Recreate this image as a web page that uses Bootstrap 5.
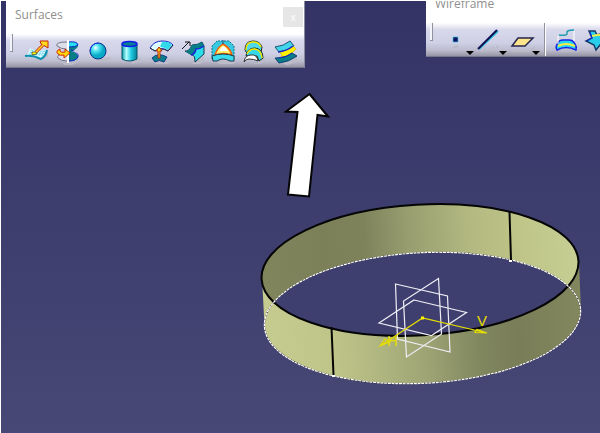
<!DOCTYPE html>
<html lang="en">
<head>
<meta charset="utf-8">
<meta name="viewport" content="width=device-width, initial-scale=1">
<title>Surfaces</title>
<link href="https://cdn.jsdelivr.net/npm/bootstrap@5.3.0/dist/css/bootstrap.min.css" rel="stylesheet">
<style>
body { background: #484876; font-family: "Open Sans", "Noto Sans", sans-serif; }
.viewport { border-left: 1px solid #fff; border-top: 1px solid #fff; background: linear-gradient(#333366, #484876); min-height: 100vh; }
.scene { width: calc(100% + 1px); margin: -1px 0 0 -1px; }
.tool-window { position: absolute; background: #fff; border-right: 1px solid #8c8ca0; border-bottom: 1px solid #77778c; }
.win-surfaces { left: 5px; top: 0; width: 299px; }
.win-wire { left: 425px; top: -11px; width: 230px; }
.win-title { font-size: 12px; line-height: 16px; color: #8f8f8f; height: 33px; padding: 6px 0 0 9px; }
.win-close { width: 20px; height: 20px; margin-right: 1px; background: #e6e6e6; color: #fff; font-size: 10px; line-height: 16px; }
.tool-strip { height: 33px; background: linear-gradient(#fff, #d9d9ec 20%, #cfcfe5 60%, #bdbdcf 82%, #9595a5); }
.grip { width: 3px; height: 18px; border-right: 1px solid #90909e; border-bottom: 1px solid #90909e; background: #f3f3fa; }
.tool { width: 30px; height: 28px; }
.tool svg, .scene { display: block; }
.wire-tool { width: 33px; }
.rule { width: 2px; height: 33px; background: #fff; border-left: 1px solid #90909e; }
</style>
<script src="https://cdn.jsdelivr.net/npm/bootstrap@5.3.0/dist/js/bootstrap.bundle.min.js"></script>
</head>
<body>
<main class="viewport position-relative overflow-hidden">
  <svg class="scene" viewBox="0 0 600 433" role="img" aria-label="Cylindrical surface with reference planes">
    <defs>
      <linearGradient id="back" gradientUnits="userSpaceOnUse" x1="262" y1="0" x2="579" y2="0"><stop stop-color="#80855c"/><stop offset=".2" stop-color="#7b8059"/><stop offset=".33" stop-color="#7e835c"/><stop offset=".46" stop-color="#969c6e"/><stop offset=".65" stop-color="#b1b77f"/><stop offset=".82" stop-color="#bfc588"/><stop offset="1" stop-color="#c6ce93"/></linearGradient>
      <linearGradient id="front" gradientUnits="userSpaceOnUse" x1="262" y1="0" x2="580" y2="0"><stop stop-color="#c6cb90"/><stop offset=".22" stop-color="#bfc589"/><stop offset=".38" stop-color="#aeb47e"/><stop offset=".53" stop-color="#9ba172"/><stop offset=".68" stop-color="#80865e"/><stop offset=".8" stop-color="#797e58"/><stop offset="1" stop-color="#82875e"/></linearGradient>
      <clipPath id="rim"><ellipse cx="420" cy="270" rx="158.7" ry="65.3" transform="rotate(-3.3 420 270)"/></clipPath>
    </defs>
    <g fill="url(#front)">
      <path d="M262 277L264.500 326L420 345L581 312L579 262L420 300Z"/>
      <g transform="rotate(-3 422.500 318)"><ellipse cx="422.500" cy="318" rx="158.300" ry="65.300"/></g>
    </g>
    <ellipse cx="420" cy="270" rx="158.700" ry="65.300" transform="rotate(-3.300 420 270)" fill="url(#back)"/>
    <g clip-path="url(#rim)"><ellipse cx="422.500" cy="318" rx="158.300" ry="65.300" transform="rotate(-3 422.500 318)" fill="#3f3f6f"/></g>
    <ellipse cx="420" cy="270" rx="158.700" ry="65.300" transform="rotate(-3.300 420 270)" fill="none" stroke="#050505" stroke-width="2"/>
    <g fill="none" transform="rotate(-3 422.500 318)">
      <ellipse cx="422.500" cy="318" rx="158.300" ry="65.300" stroke="#222"/>
      <ellipse cx="422.500" cy="318" rx="158.300" ry="65.300" stroke="#fff" stroke-width="1.200" stroke-dasharray="3 .7"/>
    </g>
    <path d="M509.500 212L511 260M331.500 327L333.500 375" stroke="#050505" stroke-width="2"/>
    <path d="M509 260h3v2h-3zM332 375h3v2h-3z" fill="#fff"/>
    <g fill="none" stroke="#eeeef5" stroke-width="1.200">
      <path d="M395.500 284L447.500 296L450 352L397.500 339Z"/>
      <path d="M438.500 278.500L403.500 301L406.500 357L441.500 334Z"/>
      <path d="M414 300L466.500 312.500L431.500 335.500L379 323Z"/>
    </g>
    <g fill="none" stroke="#e5dd00" stroke-width="1.200">
      <path d="M380 346L422.500 318L487 333M380 346L385 339L390 342ZM487 333L477 329.500L475 332.500Z"/>
      <rect x="421" y="316.500" width="3" height="3" fill="#fff000" stroke="none"/>
    </g>
    <g font-family="Liberation Sans, sans-serif" font-size="15" fill="#e5dd00"><text x="387" y="346">H</text><text x="477" y="326">V</text></g>
    <path d="M309.500 94L328 116.500L317.500 115L309 196.500L288 194.500L297.500 112L286 111.500Z" fill="#fff" stroke="#050505" stroke-width="2"/>
  </svg>

  <section class="tool-window win-surfaces" aria-label="Surfaces toolbar">
    <header class="d-flex justify-content-between align-items-start win-title"><span>Surfaces</span>
      <button type="button" class="border-0 p-0 win-close" aria-label="Close">x</button></header>
    <div class="tool-strip d-flex align-items-start">
      <span class="grip ms-1 me-2"></span>
      <div class="d-flex flex-fill justify-content-between pt-1 pe-1">
        <button type="button" class="tool border-0 bg-transparent p-0" aria-label="Extrude"><svg width="30" height="28" viewBox="0 2 30 28">
          <path d="M9 25l10-2 8-7v4l-7 6z" fill="#bcbcc8"/>
          <path d="M9 12Q15 16 26 14Q25 20 20 23Q12 20 4 21Q8 18 9 12Z" fill="#dffaff"/>
          <path d="M10 14Q17 17 25 15M8 18Q16 19 23 19M9 16Q16 18 24 17" fill="none" stroke="#5bd4e8" stroke-dasharray="2 1"/>
          <path d="M4 20Q12 19 20 23Q25 20 26 14" fill="none" stroke="#098fb0" stroke-width="2"/>
          <path d="M11 16l4 0 1 2-5 1z" fill="#ff0" stroke="#333" stroke-width=".7"/>
          <path d="M15 16L22 9" stroke="#c62000" stroke-width="3"/><path d="M19 5H27V12L24 10 20 8Z" fill="#ffdb20" stroke="#c62000"/><path d="M15 16L23 8" stroke="#ffdb20" stroke-width="1.500"/></svg></button>
        <button type="button" class="tool border-0 bg-transparent p-0" aria-label="Revolve"><svg width="30" height="28" viewBox="0 1 30 28">
          <path d="M9 25h14l3-5v5l-6 3h-7z" fill="#bcbcc8"/>
          <path d="M15 5Q3 5 5 9Q9 12 14 12V17Q4 17 6 21Q9 24 15 24" fill="#dedee8" stroke="#75758a"/>
          <path d="M17 5Q27 5 26 9Q25 12 20 14Q26 16 26 20Q25 24 17 24Z" fill="#087c87"/>
          <path d="M17 5Q25 4 26 8Q24 10 17 10" fill="#27dff0" stroke="#1023c9"/><path d="M19 13Q27 15 26 20Q24 24 17 24" fill="none" stroke="#1023c9"/><path d="M21 14Q26 13 27 11V17Z" fill="#cfcfe5"/>
          <path d="M16 3v23" stroke="#fff" stroke-width="2"/>
          <path d="M8 12Q3 14 6 17Q8 19 12 18v3l6-5-5-4v3Q9 16 8 14Z" fill="#ffd510" stroke="#d22b00"/></svg></button>
        <button type="button" class="tool border-0 bg-transparent p-0" aria-label="Sphere"><svg width="30" height="28" viewBox="0 2 30 28">
          <defs><radialGradient id="ball" cx=".35" cy=".3"><stop stop-color="#fff"/><stop offset=".4" stop-color="#58e7f3"/><stop offset="1" stop-color="#08a9c5"/></radialGradient></defs>
          <path d="M13 25l12-4 4 1-9 4z" fill="#bcbcc8"/><circle cx="15" cy="15" r="8" fill="url(#ball)" stroke="#0c318d"/><path d="M7 15Q8 7 16 7" fill="none" stroke="#2033ed"/></svg></button>
        <button type="button" class="tool border-0 bg-transparent p-0" aria-label="Cylinder"><svg width="30" height="28" viewBox="0 1 30 28">
          <defs><linearGradient id="tube"><stop stop-color="#089fac"/><stop offset=".3" stop-color="#b3ffff"/><stop offset=".6" stop-color="#21cbe3"/><stop offset="1" stop-color="#058198"/></linearGradient></defs>
          <path d="M18 24l9-3v4l-9 2z" fill="#bcbcc8"/><path d="M8 7V22Q15 26 23 22V7Z" fill="url(#tube)" stroke="#075067"/><ellipse cx="15.500" cy="7" rx="7.500" ry="2.500" fill="#087e91" stroke="#111eea" stroke-width="1.500"/></svg></button>
        <button type="button" class="tool border-0 bg-transparent p-0" aria-label="Offset"><svg width="30" height="28" viewBox="0 1 30 28">
          <path d="M9 25h13l6-5-6 7H9z" fill="#bcbcc8"/><path d="M4 11Q8 4 16 4Q24 4 27 8L22 14Q16 9 9 14Z" fill="#dcffff" stroke="#1523cb"/><path d="M16 5Q23 4 26 8L22 13Q18 10 14 10Z" fill="#31d9ea"/><path d="M4 11L9 14Q15 10 22 14L27 8" fill="none" stroke="#333"/>
          <path d="M6 21Q12 15 21 20L18 25Q13 22 9 25Z" fill="#087e88" stroke="#153d8b"/><path d="M12 21v-7h-2l3-4 3 4h-2v7z" fill="#ffc918" stroke="#b52b10"/></svg></button>
        <button type="button" class="tool border-0 bg-transparent p-0" aria-label="Sweep"><svg width="30" height="28" viewBox="0 1 30 28">
          <path d="M18 25l9-6v5l-4 3h-9z" fill="#bcbcc8"/><path d="M8 14Q12 15 15 8Q21 8 25 5L27 9V17L18 25Q18 18 15 18Z" fill="#2bdceb" stroke="#153849"/><path d="M8 14Q12 15 15 8Q21 8 25 5L27 9Q22 12 19 12Q18 17 14 18Z" fill="#087e88"/><path d="M14 18Q18 17 19 12Q23 12 27 9" fill="none" stroke="#1724d7" stroke-width="1.500"/><path d="M5 12L12 5M8 5h5v4" fill="none" stroke="#111"/></svg></button>
        <button type="button" class="tool border-0 bg-transparent p-0" aria-label="Fill"><svg width="30" height="28" viewBox="0 1 30 28">
          <path d="M9 25h17v2H11z" fill="#bcbcc8"/><path d="M4 22V9L9 4H21L26 9V22L16 18Z" fill="#38c9e0" stroke="#087791" stroke-dasharray="2 1"/><path d="M7 18Q9 11 15 7Q22 11 24 18Q16 15 7 18Z" fill="#fff36c" stroke="#f55a00" stroke-width="1.500"/><path d="M11 14Q13 11 15 9Q19 11 20 14Z" fill="#fff"/><path d="M4 19Q15 15 26 19V24H22Q15 20 9 24H5Z" fill="#38dcec" stroke="#203a4b"/><path d="M15 3v4" stroke="#205080"/></svg></button>
        <button type="button" class="tool border-0 bg-transparent p-0" aria-label="Multi-sections surface"><svg width="30" height="28" viewBox="0 1 30 28">
          <path d="M8 26h10l8-6v4l-5 3z" fill="#bcbcc8"/><path d="M6 13Q6 4 14 4Q21 4 23 10L22 15 9 18Z" fill="#50dae9" stroke="#222"/><path d="M7 13Q7 5 14 5Q20 5 22 10" fill="none" stroke="#f0e600" stroke-width="1.500"/><path d="M7 19Q8 11 16 11Q24 12 24 21L20 24 18 19Z" fill="#36d7e8" stroke="#222"/><path d="M8 17Q10 12 16 12Q22 13 23 21" fill="none" stroke="#f0e600" stroke-width="1.500"/><path d="M5 25Q6 18 12 18Q18 17 19 24Q15 22 10 22Q7 22 5 25" fill="#fff" stroke="#333"/></svg></button>
        <button type="button" class="tool border-0 bg-transparent p-0" aria-label="Blend"><svg width="30" height="28" viewBox="0 1 30 28">
          <path d="M12 26l15-7v6l-10 3z" fill="#bcbcc8"/><path d="M5 10Q14 9 20 4L24 9Q17 14 9 15Z" fill="#42d5ea" stroke="#175275"/><path d="M9 15Q18 14 23 9L26 12 22 16 24 18Q17 22 9 22L12 18Z" fill="#fff100" stroke="#d3b900" stroke-width=".7"/><path d="M8 15Q17 14 23 9" fill="none" stroke="#1923ce" stroke-width="1.500"/><path d="M5 21Q16 21 22 16L27 19Q19 25 9 26Z" fill="#087e88" stroke="#153d75"/><path d="M9 21Q17 20 22 16" fill="none" stroke="#1923ce"/></svg></button>
      </div>
    </div>
  </section>

  <section class="tool-window win-wire" aria-label="Wireframe toolbar">
    <header class="win-title">Wireframe</header>
    <div class="tool-strip d-flex align-items-start">
      <span class="grip ms-1 me-2"></span>
      <button type="button" class="tool wire-tool border-0 bg-transparent p-0" aria-label="Point"><svg width="33" height="32" viewBox="0 0 33 32"><path d="M12 14h5v5h-5z" fill="#101060" stroke="#36c6e4" stroke-width=".7"/><path d="M12 25l5-2" stroke="#bbbbc8" stroke-width="2"/><path d="M25 28h8l-4 4z"/></svg></button>
      <button type="button" class="tool wire-tool border-0 bg-transparent p-0" aria-label="Line"><svg width="33" height="32" viewBox="0 0 33 32"><path d="M5 26L24 8" stroke="#27bddc" stroke-width="2"/><path d="M4 26L23 7" stroke="#101052" stroke-width="2"/><path d="M7 28L26 23" stroke="#bbbbc8" stroke-width="2" stroke-dasharray="2 2"/><path d="M25 28h8l-4 4z"/></svg></button>
      <button type="button" class="tool wire-tool border-0 bg-transparent p-0" aria-label="Plane"><svg width="33" height="32" viewBox="0 0 33 32"><path d="M5 27h17l6-4v3l-6 3H5z" fill="#bbbbc8"/><path d="M5 23L11 15H26L18 23Z" fill="#ffe48b" stroke="#25254d" stroke-width="1.500"/><path d="M25 28h8l-4 4z"/></svg></button>
      <span class="rule ms-1"></span>
      <button type="button" class="tool wire-tool border-0 bg-transparent p-0 ms-1" aria-label="Projection"><svg width="33" height="32" viewBox="0 0 33 32"><path d="M12 27h17v2H9z" fill="#bbbbc8"/><path d="M9 12Q18 13 17 10T24 7" fill="none" stroke="#209caf" stroke-width="1.500"/><path d="M7 27Q5 24 8 20Q9 17 13 17H19Q23 17 25 21Q27 24 26 27Q16 22 7 27Z" fill="#27d7f0" stroke="#1824e3" stroke-width="1.500"/><path d="M8 23Q16 19 25 23" fill="none" stroke="#f4ed45" stroke-width="2"/><path d="M8 13V21M24 8V18" stroke="#fff"/></svg></button>
      <button type="button" class="tool wire-tool border-0 bg-transparent p-0" aria-label="Intersection"><svg width="33" height="32" viewBox="0 0 33 32"><path d="M6 8H12L14 12 24 9V25L17 22 13 27 11 22 3 18 9 15Z" fill="#27cdea" stroke="#173a65" stroke-width="1.500"/><path d="M9 13Q16 11 23 13" stroke="#e9f04b" fill="none" stroke-width="2"/><path d="M4 18L9 15L7 9" stroke="#1824e3" fill="none"/></svg></button>
    </div>
  </section>
</main>
</body>
</html>
